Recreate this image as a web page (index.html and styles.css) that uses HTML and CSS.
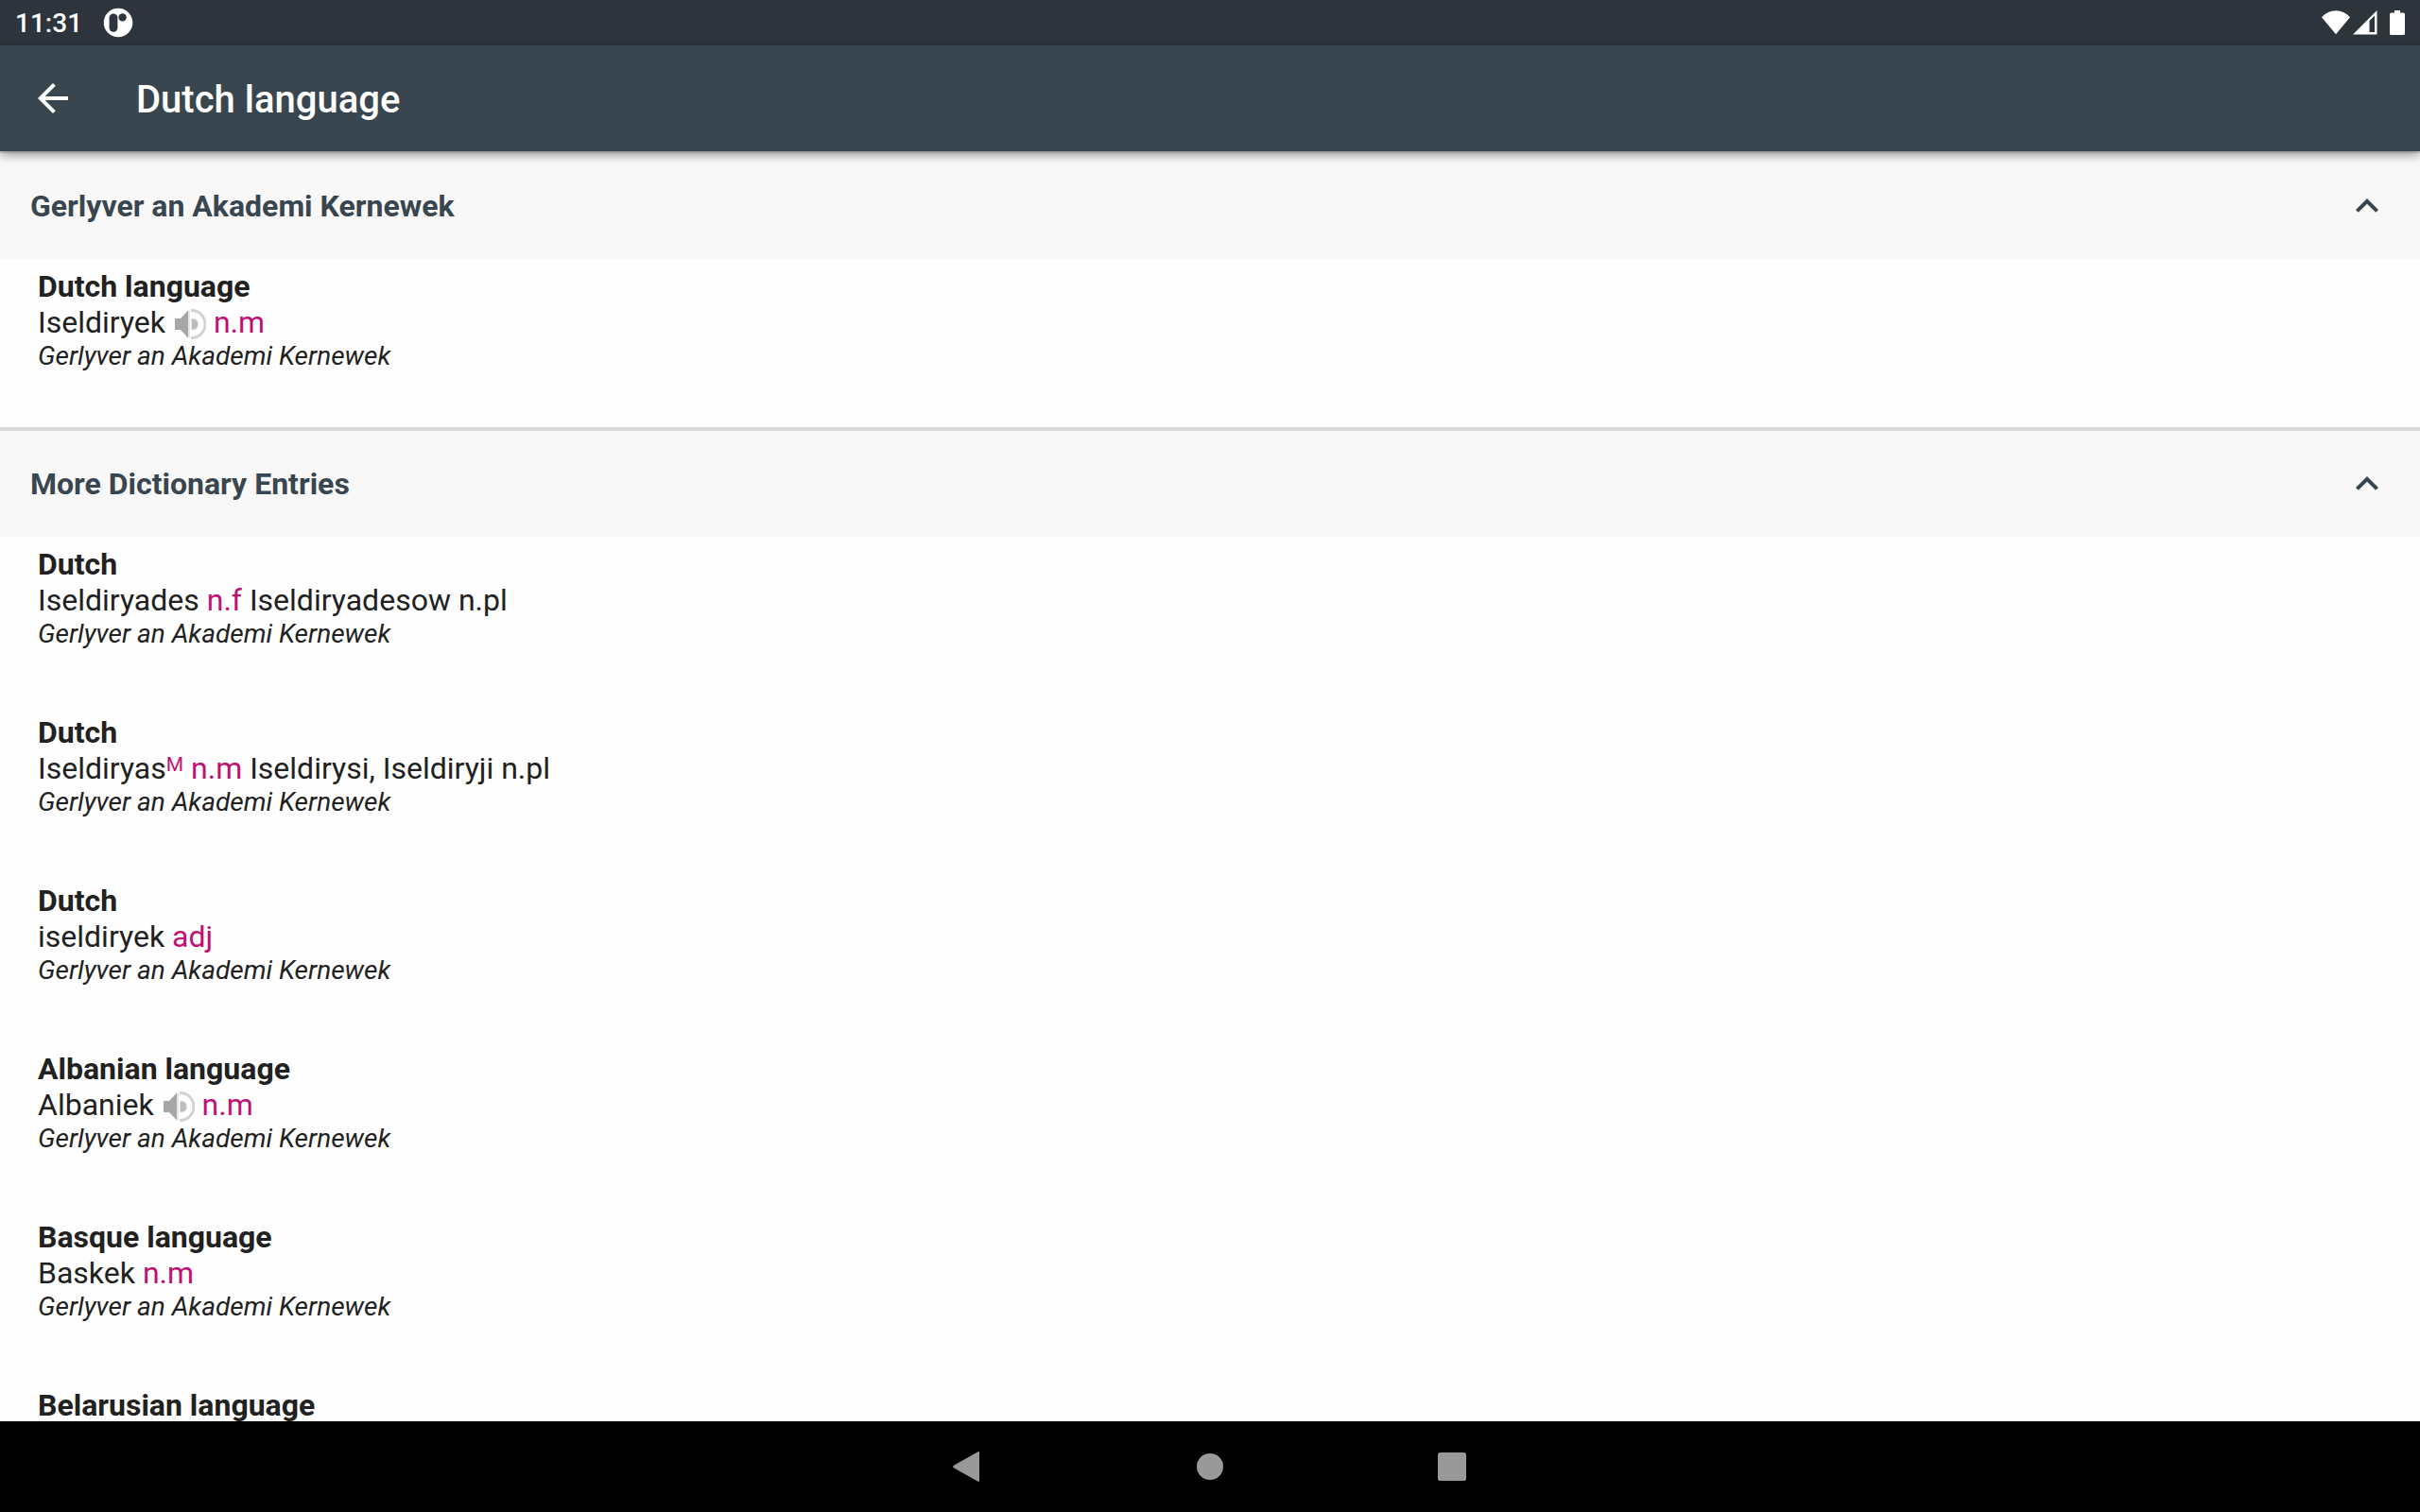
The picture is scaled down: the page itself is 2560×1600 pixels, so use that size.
FILE: index.html
```html
<!DOCTYPE html>
<html lang="en">
<head>
    <meta charset="UTF-8">
    <meta name="viewport" content="width=device-width, initial-scale=1.0">
    <title>Dutch language</title>
    <link rel="stylesheet" href="styles.css">
</head>
<body>
    <div class="status-bar">
        <span class="clock">11:31</span>
        <svg class="app-badge" viewBox="0 0 32 32" aria-hidden="true">
            <circle cx="16" cy="16" r="15.3" fill="#fff"/>
            <rect x="6.6" y="6.4" width="8.8" height="19.400" rx="4.200" fill="#2d343b"/>
            <circle cx="20.6" cy="10.4" r="4.2" fill="#2d343b"/>
        </svg>
        <div class="status-icons">
            <svg class="wifi" viewBox="0 0 30 26" aria-hidden="true">
                <path d="M0 7.200C4.200 2.600 9.300.3 15 .3s10.800 2.300 15 6.900L15 25.300z" fill="#fff"/>
            </svg>
            <svg class="signal" viewBox="0 0 26 26" aria-hidden="true">
                <path fill-rule="evenodd" d="M0 25.500L25.500 0v25.500zM17.500 11v12H23V5.500z" fill="#fff"/>
            </svg>
            <svg class="battery" viewBox="0 0 16 26" aria-hidden="true">
                <path d="M5 0h6v2.500h3.500A1.500 1.500 0 0 1 16 4v20.500a1.500 1.500 0 0 1-1.500 1.500h-13A1.500 1.500 0 0 1 0 24.500V4a1.500 1.500 0 0 1 1.500-1.500H5z" fill="#fff"/>
            </svg>
        </div>
    </div>

    <header class="app-bar">
        <button type="button" class="icon-btn" aria-label="Back">
            <svg viewBox="0 0 24 24"><path d="M20 11H7.830l5.590-5.590L12 4l-8 8 8 8 1.410-1.410L7.830 13H20v-2z" fill="#fff"/></svg>
        </button>
        <h1>Dutch language</h1>
    </header>

    <main>
        <section>
            <div class="section-head">
                <h2>Gerlyver an Akademi Kernewek</h2>
                <button type="button" class="icon-btn" aria-label="Collapse Gerlyver an Akademi Kernewek" aria-expanded="true">
                    <svg viewBox="0 0 24 24"><path d="M7.410 15.410L12 10.830l4.590 4.580L18 14l-6-6-6 6z" fill="#39464f"/></svg>
                </button>
            </div>
            <article class="entry">
                <div class="entry-text">
                    <h3>Dutch language</h3>
                    <p>Iseldiryek <button type="button" class="play" aria-label="Play Iseldiryek"><svg viewBox="0 0 35 34"><use href="#speaker"/></svg></button> <span class="pos">n.m</span></p>
                    <cite>Gerlyver an Akademi Kernewek</cite>
                </div>
            </article>
        </section>

        <section>
            <div class="section-head">
                <h2>More Dictionary Entries</h2>
                <button type="button" class="icon-btn" aria-label="Collapse More Dictionary Entries" aria-expanded="true">
                    <svg viewBox="0 0 24 24"><path d="M7.410 15.410L12 10.830l4.590 4.580L18 14l-6-6-6 6z" fill="#39464f"/></svg>
                </button>
            </div>
            <article class="entry">
                <div class="entry-text">
                    <h3>Dutch</h3>
                    <p>Iseldiryades <span class="pos">n.f</span> Iseldiryadesow n.pl</p>
                    <cite>Gerlyver an Akademi Kernewek</cite>
                </div>
            </article>
            <article class="entry">
                <div class="entry-text">
                    <h3>Dutch</h3>
                    <p>Iseldiryas<sup class="pos">M</sup> <span class="pos">n.m</span> Iseldirysi, Iseldiryji n.pl</p>
                    <cite>Gerlyver an Akademi Kernewek</cite>
                </div>
            </article>
            <article class="entry">
                <div class="entry-text">
                    <h3>Dutch</h3>
                    <p>iseldiryek <span class="pos">adj</span></p>
                    <cite>Gerlyver an Akademi Kernewek</cite>
                </div>
            </article>
            <article class="entry">
                <div class="entry-text">
                    <h3>Albanian language</h3>
                    <p>Albaniek <button type="button" class="play" aria-label="Play Albaniek"><svg viewBox="0 0 35 34"><use href="#speaker"/></svg></button> <span class="pos">n.m</span></p>
                    <cite>Gerlyver an Akademi Kernewek</cite>
                </div>
            </article>
            <article class="entry">
                <div class="entry-text">
                    <h3>Basque language</h3>
                    <p>Baskek <span class="pos">n.m</span></p>
                    <cite>Gerlyver an Akademi Kernewek</cite>
                </div>
            </article>
            <article class="entry">
                <div class="entry-text">
                    <h3>Belarusian language</h3>
                </div>
            </article>
        </section>
    </main>

    <nav class="nav-bar" aria-label="System">
        <button type="button" aria-label="Back">
            <svg viewBox="0 0 48 48"><path d="M36 9.400v29.200q0 2.200-1.800 1L9 25.300q-2-1.300 0-2.600L34.200 8.400q1.800-1.200 1.800 1z" fill="#999"/></svg>
        </button>
        <button type="button" aria-label="Home">
            <svg viewBox="0 0 48 48"><circle cx="24" cy="24" r="14" fill="#999"/></svg>
        </button>
        <button type="button" aria-label="Recent apps">
            <svg viewBox="0 0 48 48"><rect x="9" y="9" width="30" height="30" rx="2.500" fill="#999"/></svg>
        </button>
    </nav>

    <!-- shared speaker icon -->
    <svg class="sprite" width="0" height="0" aria-hidden="true">
        <symbol id="speaker" viewBox="0 0 35 34">
            <path d="M2 11h6l8-8.500v29L8 23H2z" fill="#a6a6a6"/>
            <path d="M16 2.500h2v29h-2z" fill="#e6e6e6"/>
            <path d="M19 2.600h1a14 14.400 0 0 1 0 28.800h-1" fill="none" stroke="#d2d2d2" stroke-width="3"/>
            <path d="M19.500 11q7 0 7 6t-7 6z" fill="#bcbcbc" stroke="#e2e2e2" stroke-width="1"/>
        </symbol>
    </svg>
</body>
</html>
```

FILE: styles.css
```css
* {
    box-sizing: border-box;
}

body {
    margin: 0;
    height: 100vh;
    display: flex;
    flex-direction: column;
    font-family: Roboto, "Noto Sans", sans-serif;
    font-size: 32px;
    color: #212121;
    background-color: #fdfdfd;
}

h1, h2, h3, p {
    margin: 0;
}

button {
    padding: 0;
    border: none;
    background: none;
    cursor: pointer;
}

svg {
    display: block;
}

/* status bar */
.status-bar {
    display: flex;
    align-items: center;
    height: 48px;
    padding: 0 16px;
    color: #fff;
    background-color: #2d343b;
}

.clock {
    font-size: 28px;
    font-weight: 500;
    line-height: 48px;
    padding-top: 2px;
}

.app-badge {
    width: 32px;
    height: 32px;
    margin-left: 22px;
}

.status-icons {
    display: flex;
    align-items: center;
    margin-left: auto;
}

.wifi {
    width: 30px;
    height: 26px;
}

.signal {
    width: 26px;
    height: 26px;
    margin-left: 3px;
}

.battery {
    width: 16px;
    height: 26px;
    margin-left: 13px;
}

/* app bar */
.app-bar {
    position: relative;
    z-index: 1;
    display: flex;
    align-items: center;
    gap: 64px;
    height: 112px;
    padding: 0 32px;
    color: #fff;
    background-color: #39464f;
    box-shadow: 0 4px 10px rgba(0, 0, 0, 0.4);
}

.app-bar h1 {
    padding-top: 2px;
    font-size: 40px;
    font-weight: 500;
}

.icon-btn svg {
    width: 48px;
    height: 48px;
}

/* dictionary sections */
main {
    flex: 1;
    min-height: 0;
    margin-top: -2px;
    overflow-y: auto;
    scrollbar-width: none;
}

section {
    border-top: 4px solid #d9d9d9;
}

.section-head {
    display: flex;
    align-items: center;
    justify-content: space-between;
    height: 112px;
    padding: 0 32px;
    background-color: #f8f8f8;
}

.section-head h2 {
    font-size: 32px;
    font-weight: 700;
    color: #39464f;
}

.entry {
    padding-bottom: 60px;
}

.entry-text {
    padding: 10px 40px 0;
    height: 118px;
    background-color: #fefefe;
}

.entry h3 {
    font-size: 32px;
    font-weight: 700;
    line-height: 38px;
}

.entry p {
    line-height: 38px;
    height: 38px;
}

.entry cite {
    display: block;
    font-size: 28px;
    line-height: 34px;
}

.pos {
    color: #bf1174;
}

sup.pos {
    font-size: 21px;
    line-height: 1;
    vertical-align: 8px;
}

.play {
    vertical-align: -8px;
}

.play svg {
    width: 35px;
    height: 34px;
}

/* system navigation */
.nav-bar {
    display: flex;
    justify-content: center;
    align-items: center;
    gap: 208px;
    height: 96px;
    background-color: #000;
}

.nav-bar svg {
    width: 48px;
    height: 48px;
}

.sprite {
    position: absolute;
}
```
